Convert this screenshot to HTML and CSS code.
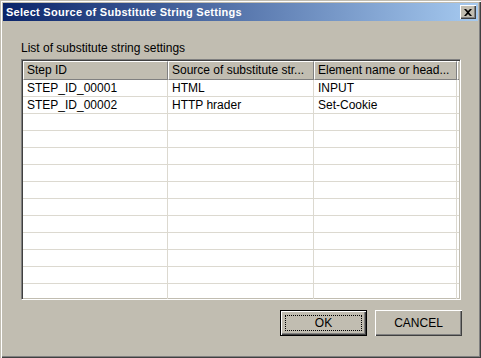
FILE: index.html
```html
<!DOCTYPE html>
<html lang="en">
<head>
    <meta charset="UTF-8">
    <title>Select Source of Substitute String Settings</title>
    <link rel="stylesheet" href="styles.css">
</head>
<body>
    <!-- Dialog window -->
    <div class="window">
        <div class="title-bar">
            <span class="title-text">Select Source of Substitute String Settings</span>
            <button class="close-button">
                <svg viewBox="0 0 8 7" width="8" height="7"><path d="M0 0h2l2 2 2-2h2L5 3.5 8 7H6L4 5 2 7H0l3-3.5z" fill="#000"/></svg>
            </button>
        </div>

        <div class="content">
            <div class="label">List of substitute string settings</div>

            <!-- Settings table -->
            <div class="table">
                <div class="row header-row">
                    <div class="cell head">Step ID</div>
                    <div class="cell head">Source of substitute str...</div>
                    <div class="cell head">Element name or head...</div>
                    <div class="cell head filler"></div>
                </div>
                <div class="row"><div class="cell">STEP_ID_00001</div><div class="cell">HTML</div><div class="cell">INPUT</div><div class="cell filler"></div></div>
                <div class="row"><div class="cell">STEP_ID_00002</div><div class="cell">HTTP hrader</div><div class="cell">Set-Cookie</div><div class="cell filler"></div></div>
                <div class="row"><div class="cell"></div><div class="cell"></div><div class="cell"></div><div class="cell filler"></div></div>
                <div class="row"><div class="cell"></div><div class="cell"></div><div class="cell"></div><div class="cell filler"></div></div>
                <div class="row"><div class="cell"></div><div class="cell"></div><div class="cell"></div><div class="cell filler"></div></div>
                <div class="row"><div class="cell"></div><div class="cell"></div><div class="cell"></div><div class="cell filler"></div></div>
                <div class="row"><div class="cell"></div><div class="cell"></div><div class="cell"></div><div class="cell filler"></div></div>
                <div class="row"><div class="cell"></div><div class="cell"></div><div class="cell"></div><div class="cell filler"></div></div>
                <div class="row"><div class="cell"></div><div class="cell"></div><div class="cell"></div><div class="cell filler"></div></div>
                <div class="row"><div class="cell"></div><div class="cell"></div><div class="cell"></div><div class="cell filler"></div></div>
                <div class="row"><div class="cell"></div><div class="cell"></div><div class="cell"></div><div class="cell filler"></div></div>
                <div class="row"><div class="cell"></div><div class="cell"></div><div class="cell"></div><div class="cell filler"></div></div>
                <div class="row"><div class="cell"></div><div class="cell"></div><div class="cell"></div><div class="cell filler"></div></div>
                <div class="row"><div class="cell"></div><div class="cell"></div><div class="cell"></div><div class="cell filler"></div></div>
            </div>

            <!-- Dialog buttons -->
            <div class="buttons">
                <button class="button default"><span class="focus">OK</span></button>
                <button class="button">CANCEL</button>
            </div>
        </div>
    </div>
</body>
</html>
```

FILE: styles.css
```css
/* Page reset */
body {
    margin: 0;
    font-family: 'Liberation Sans', Arial, sans-serif;
    font-size: 12px;
    color: #000;
}

/* Window frame with classic bevel */
.window {
    box-sizing: border-box;
    width: 481px;
    height: 358px;
    background: #c1bdb1;
    padding: 3px;
    display: flex;
    flex-direction: column;
    box-shadow: inset 1px 1px 0 #c1bdb1, inset 2px 2px 0 #fff, inset -1px -1px 0 #404040, inset -2px -2px 0 #808080;
}

/* Title bar */
.title-bar {
    height: 18px;
    display: flex;
    align-items: center;
    padding: 0 2px 0 3px;
    background: linear-gradient(to right, #0a246a, #a6caf0);
}

.title-text {
    flex: 1;
    color: #fff;
    font-weight: bold;
    font-size: 11px;
    letter-spacing: 0.27px;
}

.close-button {
    width: 16px;
    height: 14px;
    padding: 0;
    border: none;
    background: #c1bdb1;
    display: flex;
    align-items: center;
    justify-content: center;
    box-shadow: inset 1px 1px 0 #fff, inset -1px -1px 0 #404040, inset -2px -2px 0 #808080;
}

/* Main content */
.content {
    flex: 1;
    display: flex;
    flex-direction: column;
    padding: 20px 17px 0 18px;
}

.label {
    line-height: 14px;
    margin-bottom: 4px;
}

/* Table with sunken frame */
.table {
    box-sizing: border-box;
    height: 241px;
    overflow: hidden;
    background: #fff;
    border: 1px solid;
    border-color: #808080 #fff #fff #808080;
    box-shadow: inset 1px 1px 0 #404040, inset -1px -1px 0 #c1bdb1;
    padding: 1px;
}

.row {
    display: grid;
    grid-template-columns: 145px 146px 143px 1fr;
    height: 16px;
    border-bottom: 1px solid #dcd9d0;
}

.cell {
    line-height: 13px;
    padding: 2px 0 0 4px;
    border-right: 1px solid #dcd9d0;
    white-space: nowrap;
    overflow: hidden;
}

.header-row {
    height: 19px;
    border-bottom: none;
    background: #c1bdb1;
}

.cell.head {
    line-height: 17px;
    padding: 0 0 0 3px;
    border-top: 1px solid #fff;
    border-left: 1px solid #fff;
    border-right: 1px solid #808080;
    border-bottom: 1px solid #808080;
}

.cell.filler {
    border-right: none;
    padding: 0;
}

/* Buttons */
.buttons {
    display: flex;
    justify-content: flex-end;
    gap: 8px;
    margin-top: 10px;
    margin-right: -1px;
}

.button {
    box-sizing: border-box;
    width: 87px;
    height: 26px;
    padding: 0;
    border: none;
    background: #c1bdb1;
    font-family: 'Liberation Sans', Arial, sans-serif;
    font-size: 12px;
    color: #000;
    box-shadow: inset 1px 1px 0 #fff, inset -1px -1px 0 #404040, inset -2px -2px 0 #808080;
}

.button.default {
    border: 1px solid #000;
    padding: 4px;
}

.focus {
    display: flex;
    align-items: center;
    justify-content: center;
    height: 100%;
    border: 1px dotted #000;
    box-sizing: border-box;
}
```
